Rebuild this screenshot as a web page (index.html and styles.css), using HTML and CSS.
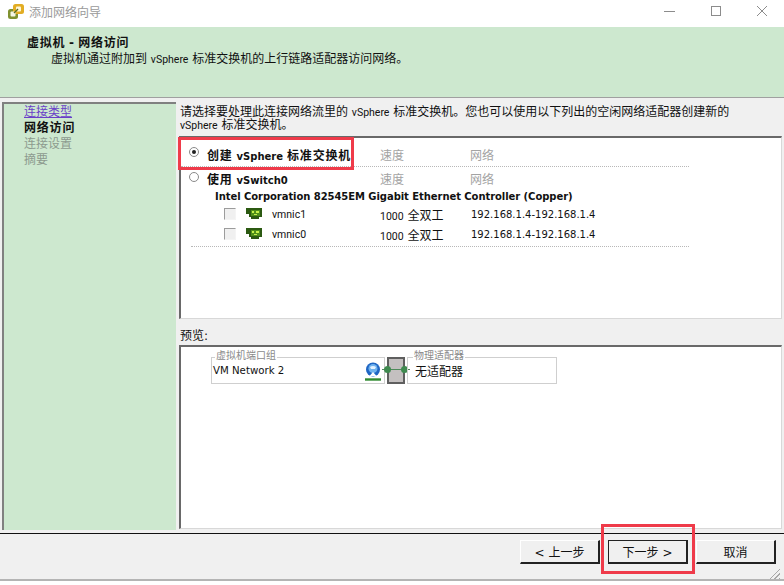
FILE: index.html
```html
<!DOCTYPE html>
<html lang="zh-CN">
<head>
    <meta charset="UTF-8">
    <title>添加网络向导</title>
    <link rel="stylesheet" href="styles.css">
</head>
<body>
    <div id="window">
        <div class="titlebar">
            <svg class="app-icon" width="16" height="15" viewBox="0 0 16 15">
                <rect x="0" y="5" width="10" height="10" rx="2.5" fill="#7f9130"/>
                <rect x="5" y="0" width="11" height="10" rx="2.5" fill="#e2ad24"/>
                <rect x="2.5" y="7.5" width="5" height="5" rx="1" fill="#f4f6e4"/>
                <rect x="8" y="2.5" width="5" height="5" rx="1" fill="#fff6d8"/>
                <path d="M6 9L10 5" stroke="#5f6f1e" stroke-width="1.5"/>
            </svg>
            <span class="title">添加网络向导</span>
            <div class="controls">
                <svg width="12" height="12" viewBox="0 0 12 12"><path d="M0 6.5H11" stroke="#8c8c8c"/></svg>
                <svg width="12" height="12" viewBox="0 0 12 12"><rect x="1.5" y="1.5" width="9" height="9" fill="none" stroke="#8c8c8c"/></svg>
                <svg width="12" height="12" viewBox="0 0 12 12"><path d="M1 1L11 11M11 1L1 11" stroke="#8c8c8c"/></svg>
            </div>
        </div>

        <div class="header">
            <h1>虚拟机 - 网络访问</h1>
            <p>虚拟机通过附加到 <span class="lat">vSphere</span> 标准交换机的上行链路适配器访问网络。</p>
        </div>

        <div class="body">
            <div class="steps">
                <a href="#" class="step link">连接类型</a>
                <div class="step current">网络访问</div>
                <div class="step">连接设置</div>
                <div class="step">摘要</div>
            </div>
            <div class="content">
                <p class="intro">请选择要处理此连接网络流里的 <span class="lat">vSphere</span> 标准交换机。您也可以使用以下列出的空闲网络适配器创建新的<br><span class="lat">vSphere</span> 标准交换机。</p>

                <div class="listbox">
                    <div class="row row-create">
                        <span class="radio checked"></span>
                        <b class="name">创建 <span class="lat">vSphere</span> 标准交换机</b>
                        <span class="muted col-speed">速度</span>
                        <span class="muted col-net">网络</span>
                    </div>
                    <div class="row row-switch">
                        <span class="radio"></span>
                        <b class="name">使用 <span class="lat">vSwitch0</span></b>
                        <span class="muted col-speed">速度</span>
                        <span class="muted col-net">网络</span>
                    </div>
                    <div class="vendor">Intel Corporation 82545EM Gigabit Ethernet Controller (Copper)</div>
                    <div class="nic">
                        <span class="checkbox"></span>
                        <svg class="nic-icon" width="16" height="12" viewBox="0 0 16 12">
                            <path d="M0 0H16V9H13V11H5V9H3V6H0Z" fill="#2c5a12"/>
                            <path d="M5 2H14V8H5Z" fill="#4f8f1a"/>
                            <path d="M6 3H8V5H6ZM10 3H13V5H10ZM8 6H11V7H8Z" fill="#c6f04a"/>
                        </svg>
                        <span class="nic-name">vmnic1</span>
                        <span class="col-speed"><span class="speed">1000</span> 全双工</span>
                        <span class="col-net ip">192.168.1.4-192.168.1.4</span>
                    </div>
                    <div class="nic nic-last">
                        <span class="checkbox"></span>
                        <svg class="nic-icon" width="16" height="12" viewBox="0 0 16 12">
                            <path d="M0 0H16V9H13V11H5V9H3V6H0Z" fill="#2c5a12"/>
                            <path d="M5 2H14V8H5Z" fill="#4f8f1a"/>
                            <path d="M6 3H8V5H6ZM10 3H13V5H10ZM8 6H11V7H8Z" fill="#c6f04a"/>
                        </svg>
                        <span class="nic-name">vmnic0</span>
                        <span class="col-speed"><span class="speed">1000</span> 全双工</span>
                        <span class="col-net ip">192.168.1.4-192.168.1.4</span>
                    </div>
                </div>

                <div class="preview-label">预览:</div>
                <div class="preview">
                    <div class="diagram">
                        <div class="group portgroup">
                            <span class="legend">虚拟机端口组</span>
                            <span class="pg-name">VM Network 2</span>
                            <svg class="globe" width="18" height="20" viewBox="0 0 18 20">
                                <circle cx="9" cy="7.5" r="7" fill="#1f66c4"/>
                                <circle cx="9" cy="6.5" r="4.5" fill="#6fb2ee"/>
                                <path d="M6 5C7.5 3.5 10.5 3.5 12 5L11 7H7Z" fill="#e4f2ff"/>
                                <path d="M9 10L5.5 14H12.5Z" fill="#fff"/>
                                <path d="M1 17.5H17" stroke="#2f8a2f" stroke-width="2.4"/>
                            </svg>
                        </div>
                        <div class="switch">
                            <span class="wire"></span>
                            <span class="dot dot-l"></span>
                            <span class="dot dot-r"></span>
                        </div>
                        <div class="group adapter">
                            <span class="legend">物理适配器</span>
                            <span>无适配器</span>
                        </div>
                    </div>
                </div>
            </div>
        </div>

        <div class="footer">
            <button>&lt; 上一步</button>
            <button class="primary">下一步 &gt;</button>
            <button class="cancel">取消</button>
        </div>
        <div class="grip"></div>
    </div>

    <div class="mark mark-option"></div>
    <div class="mark mark-next"></div>
</body>
</html>
```

FILE: styles.css
```css
* {
    box-sizing: border-box;
}
body {
    margin: 0;
    width: 784px;
    height: 585px;
    overflow: hidden;
    background-color: #fff;
    font-family: "DejaVu Sans", "Noto Sans CJK SC", sans-serif;
    font-size: 12px;
    color: #111;
    position: relative;
}
.lat {
    font-family: Roboto, sans-serif;
    font-size: 10.5px;
}
#window {
    display: flex;
    flex-direction: column;
    height: 581px;
    border-bottom: 2px solid #b4b4b4;
}

/* title bar */
.titlebar {
    display: flex;
    align-items: center;
    height: 27px;
    flex-shrink: 0;
    padding: 0 0 5px 8px;
    background-color: #fff;
}
.app-icon {
    margin-right: 5px;
}
.title {
    color: #9a9a9a;
}
.controls {
    display: flex;
    gap: 34px;
    margin-left: auto;
    margin-right: 16px;
}

/* green header */
.header {
    height: 71px;
    flex-shrink: 0;
    padding-top: 8px;
    background-color: #cde8cf;
    border-bottom: 1px solid #a0a0a0;
}
.header h1 {
    margin: 0 0 0 27px;
    font-size: 12px;
    line-height: 16px;
    font-weight: bold;
    letter-spacing: 0.8px;
    word-spacing: -1.5px;
}
.header p {
    margin: 0 0 0 51px;
    line-height: 16px;
}

/* main */
.body {
    display: flex;
    height: 435px;
    flex-shrink: 0;
    padding: 4px 2px 3px 2px;
    background-color: #f0f0f0;
}
.steps {
    width: 174px;
    flex-shrink: 0;
    padding: 0 0 0 20px;
    background-color: #cde8cf;
    border-left: 2px solid #808080;
    border-top: 2px solid #808080;
}
.step {
    display: block;
    line-height: 16px;
    color: #8c9a8e;
}
.step.link {
    color: #6a3fc8;
}
.step.current {
    color: #111;
    font-weight: bold;
    letter-spacing: 0.8px;
}
.content {
    flex: 1;
    display: flex;
    flex-direction: column;
    padding-left: 3px;
    min-width: 0;
}
.intro {
    margin: 0 0 4px 0;
    padding: 4px 0 0 1px;
    line-height: 13px;
    height: 30px;
    white-space: nowrap;
}

.listbox {
    height: 183px;
    position: relative;
    background-color: #fff;
    border-left: 2px solid #696969;
    border-top: 2px solid #696969;
    border-right: 1px solid #d8d8d8;
    border-bottom: 1px solid #d8d8d8;
    padding-top: 6px;
    flex-shrink: 0;
}
.row,
.nic {
    display: flex;
    align-items: center;
    position: relative;
    width: 508px;
}
.row {
    padding-left: 8px;
}
.row-create {
    height: 23px;
    padding-bottom: 2px;
    border-bottom: 1px dotted #b8b8b8;
}
.row-switch {
    height: 22px;
}
.radio {
    width: 10px;
    height: 10px;
    border-radius: 50%;
    background-color: #fff;
    border: 1px solid #8a8a8a;
    margin-right: 8px;
    flex-shrink: 0;
    position: relative;
    top: -2px;
}
.row-switch .radio {
    top: -1px;
}
.radio.checked::after {
    content: "";
    display: block;
    width: 4px;
    height: 4px;
    margin: 2px;
    border-radius: 50%;
    background-color: #222;
}
.name {
    letter-spacing: 0.8px;
    word-spacing: -1px;
    white-space: nowrap;
}
.name .lat {
    font-family: "DejaVu Sans", sans-serif;
    font-size: 10px;
    letter-spacing: 0;
}
.col-speed,
.col-net {
    white-space: nowrap;
}
.col-speed {
    position: absolute;
    left: 199px;
}
.col-net {
    position: absolute;
    left: 289px;
}
.muted {
    color: #a3a3a3;
}
.vendor {
    height: 14px;
    line-height: 14px;
    padding: 1px 0 0 34px;
    font-weight: bold;
    font-size: 10px;
    letter-spacing: -0.06px;
}
.nic {
    height: 20px;
    padding-left: 43px;
    top: 1px;
}
.speed {
    font-family: Roboto, sans-serif;
    font-size: 10.5px;
}
.nic .ip {
    font-size: 10px;
    left: 290px;
}
.nic-last::after {
    content: "";
    position: absolute;
    left: 10px;
    right: 0;
    bottom: -3px;
    border-bottom: 1px dotted #b8b8b8;
}
.checkbox {
    width: 12px;
    height: 12px;
    border: 1px solid #f4f4f4;
    border-top-color: #9c9c9c;
    border-left-color: #9c9c9c;
    background-color: #f0f0f0;
    flex-shrink: 0;
}
.nic-icon {
    margin-left: 10px;
}
.nic-name {
    margin-left: 10px;
    font-family: Roboto, sans-serif;
    font-size: 10.5px;
}

.preview-label {
    margin-top: 9px;
    height: 17px;
    line-height: 17px;
    padding-left: 1px;
}
.preview {
    height: 184px;
    padding: 10px 0 0 30px;
    background-color: #fff;
    border-left: 2px solid #696969;
    border-top: 2px solid #696969;
    border-right: 1px solid #d8d8d8;
    border-bottom: 1px solid #d8d8d8;
}
.diagram {
    display: flex;
    height: 28px;
    align-items: flex-start;
}
.group {
    position: relative;
    height: 27px;
    display: flex;
    align-items: center;
    border: 1px solid #cfcfcf;
    padding-left: 1px;
}
.pg-name {
    font-size: 10.2px;
}
.portgroup {
    width: 174px;
}
.adapter {
    width: 150px;
    padding-left: 7px;
}
.legend {
    position: absolute;
    top: -8px;
    left: 3px;
    padding: 0 1px;
    background-color: #fff;
    font-size: 10px;
    line-height: 11px;
    color: #8a8a8a;
}
.adapter .legend {
    left: 5px;
}
.globe {
    position: absolute;
    left: 152px;
    top: 4px;
}
.switch {
    position: relative;
    width: 18px;
    height: 27px;
    margin: 0 2px;
    background-color: #c4c0c0;
    border: 2px solid #5f5f5f;
}
.wire {
    position: absolute;
    left: -7px;
    right: -7px;
    top: 10px;
    height: 1px;
    background-color: #4f8a5a;
}
.dot {
    position: absolute;
    top: 7px;
    width: 7px;
    height: 7px;
    border-radius: 50%;
    background-color: #3f8a4f;
}
.dot-l {
    left: -5px;
}
.dot-r {
    right: -5px;
}

/* footer */
.footer {
    flex: 1;
    display: flex;
    justify-content: flex-end;
    align-items: flex-start;
    gap: 8px;
    padding: 6px 8px 0 0;
    background-color: #f0f0f0;
    border-top: 1px solid #111;
}
button {
    width: 80px;
    height: 24px;
    padding: 0;
    font-family: "DejaVu Sans", "Noto Sans CJK SC", sans-serif;
    font-size: 12px;
    color: #111;
    background-color: #f0f0f0;
    border: 1px solid;
    border-color: #fff #222 #222 #fff;
    border-width: 1px 2px 2px 1px;
}
button.primary {
    border: 1px solid #222;
    border-width: 1px 2px 2px 1px;
}
.grip {
    position: absolute;
    right: 4px;
    bottom: 6px;
    width: 13px;
    height: 13px;
    background: repeating-linear-gradient(135deg, transparent 0 2px, #a8a8a8 2px 3px);
    clip-path: polygon(100% 0, 100% 100%, 0 100%);
}

/* red callouts drawn over the screenshot */
.mark {
    position: absolute;
    border: 3px solid #ef3b4a;
    pointer-events: none;
}
.mark-option {
    left: 178px;
    top: 137px;
    width: 176px;
    height: 33px;
}
.mark-next {
    left: 601px;
    top: 524px;
    width: 94px;
    height: 50px;
}
```
